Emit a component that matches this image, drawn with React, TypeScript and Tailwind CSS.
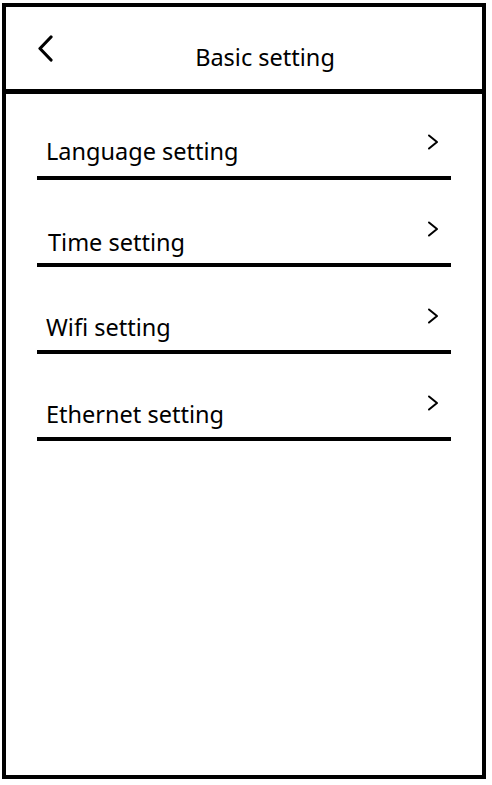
const items = [
  { label: "Language setting", pad: "pb-[10px]", indent: "pl-[9px]" },
  { label: "Time setting", pad: "pb-[6px]", indent: "pl-[11px]" },
  { label: "Wifi setting", pad: "pb-[8px]", indent: "pl-[9px]" },
  { label: "Ethernet setting", pad: "pb-[8px]", indent: "pl-[9px]" },
]

function BackIcon() {
  return (
    <svg width="16" height="28" viewBox="0 0 16 28" fill="none">
      <polyline points="14,3 3,14.5 14,26" stroke="black" strokeWidth="3.2" strokeLinecap="round" strokeLinejoin="round" />
    </svg>
  )
}

function ChevronRight() {
  return (
    <svg width="12" height="16" viewBox="0 0 12 16" fill="none">
      <polyline points="2,1.5 10,8 2,14.5" stroke="black" strokeWidth="2" strokeLinecap="round" strokeLinejoin="round" />
    </svg>
  )
}

export default function App() {
  return (
    <div className="w-[492px] h-[785px] bg-white pl-[2px] pt-[3px]" style={{ fontFamily: '"Noto Sans", "Open Sans", sans-serif' }}>
      <div className="w-[484px] h-[776px] border-4 border-black flex flex-col text-black">
        <div className="h-[87px] border-b-[5px] border-black flex items-start">
          <div className="ml-[31px] mt-[27px]">
            <BackIcon />
          </div>
          <div className="flex-1 text-center pt-[35px] pr-[5px] text-[23.5px] leading-[30px]">Basic setting</div>
        </div>

        <div className="px-[31px]">
          {items.map((item, i) => (
            <div
              key={item.label}
              className={`flex justify-between border-b-4 border-black ${i === 0 ? "h-[86px]" : "h-[87px]"}`}
            >
              <span className={`self-end text-[23.5px] leading-[30px] ${item.pad} ${item.indent}`}>{item.label}</span>
              <div className={`mr-[12px] ${i === 0 ? "mt-[40px]" : "mt-[41px]"}`}>
                <ChevronRight />
              </div>
            </div>
          ))}
        </div>
      </div>
    </div>
  )
}
